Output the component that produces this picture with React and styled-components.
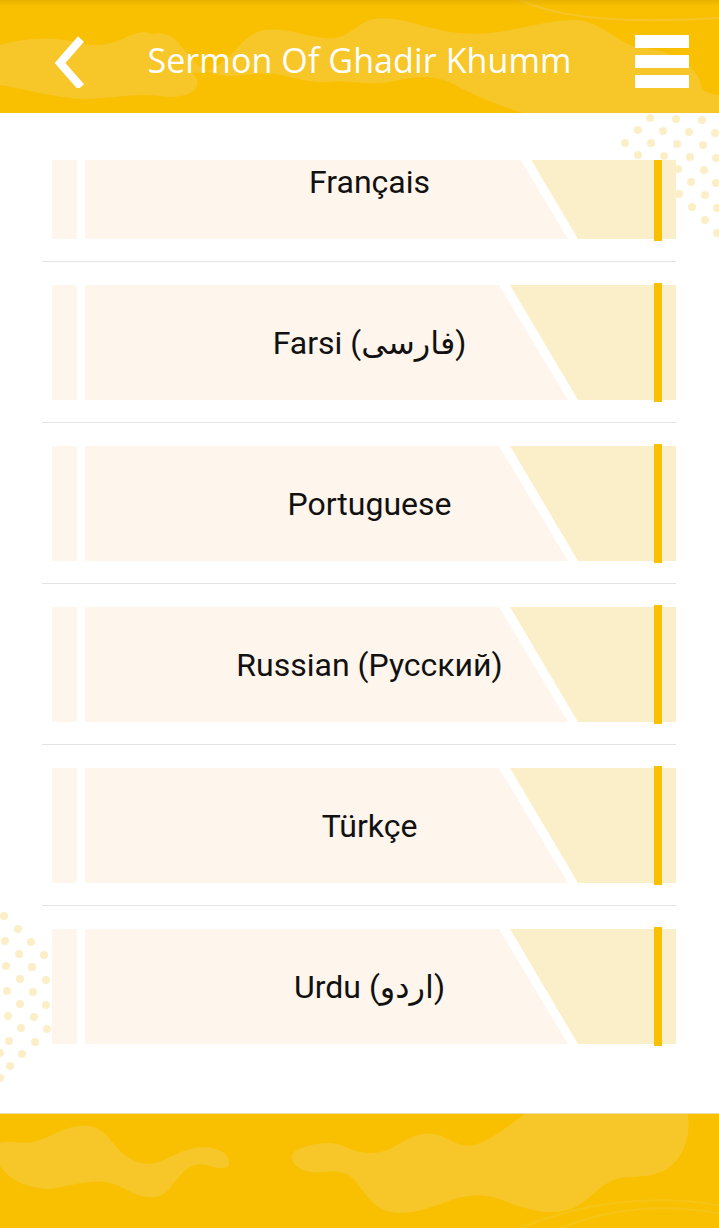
import React from 'react';
import styled, { createGlobalStyle } from 'styled-components';

const GlobalStyle = createGlobalStyle`
  html, body {
    margin: 0;
    padding: 0;
    background: #ffffff;
  }
  body {
    font-family: Roboto, 'DejaVu Sans', sans-serif;
  }
`;

const YELLOW = '#f8c000';
const BLOB = '#f7c628';
const CARD_LIGHT = '#fef5ec';
const CARD_DARK = '#fbefca';
const DOT = '#fcefc8';

const Screen = styled.div`
  width: 719px;
  height: 1228px;
  display: flex;
  flex-direction: column;
  overflow: hidden;
`;

const Header = styled.header`
  position: relative;
  height: 113px;
  flex: none;
  background: ${YELLOW};
  display: grid;
  grid-template-columns: 1fr auto 1fr;
  align-items: center;
  padding-top: 10px;
  box-sizing: border-box;
  overflow: hidden;

  &::before {
    content: '';
    position: absolute;
    left: 0;
    right: 0;
    top: 0;
    height: 6px;
    background: linear-gradient(to bottom, rgba(200, 150, 0, 0.35), rgba(200, 150, 0, 0));
    z-index: 1;
  }
`;

const Waves = styled.svg`
  position: absolute;
  left: 0;
  top: 0;
  width: 100%;
  height: 100%;
  z-index: 0;
`;

const BackButton = styled.button`
  position: relative;
  z-index: 2;
  justify-self: start;
  margin-left: 52px;
  width: 40px;
  height: 52px;
  padding: 0;
  border: 0;
  background: none;
  display: flex;
  align-items: center;
`;

const Title = styled.h1`
  position: relative;
  z-index: 2;
  margin: 0 0 4px;
  font-family: 'Open Sans', sans-serif;
  font-weight: 400;
  font-size: 34px;
  color: #ffffff;
  letter-spacing: 0.1px;
  white-space: nowrap;
`;

const MenuButton = styled.button`
  position: relative;
  z-index: 2;
  justify-self: end;
  margin-right: 30px;
  padding: 0;
  border: 0;
  background: none;
  display: flex;
  flex-direction: column;
  gap: 7px;
`;

const MenuBar = styled.span`
  display: block;
  width: 54px;
  height: 13px;
  background: #ffffff;
`;

const Main = styled.main`
  position: relative;
  flex: 1;
  background: #ffffff;
  overflow: hidden;
`;

const Dots = styled.svg`
  position: absolute;
  left: 0;
  top: 0;
  width: 719px;
  height: 1000px;
  z-index: 0;
`;

const Viewport = styled.div`
  position: relative;
  z-index: 1;
  margin-top: 47px;
  height: 900px;
  overflow: hidden;
`;

const List = styled.ul`
  list-style: none;
  margin: -59px 0 0;
  padding: 0 43px 0 42px;
`;

const Row = styled.li`
  padding: 23px 0 22px 10px;
  border-bottom: 1px solid #e3e3e3;
`;

const Card = styled.div`
  display: flex;
  height: 115px;
  gap: 8px;
  cursor: pointer;
`;

const Stub = styled.span`
  width: 25px;
  flex: none;
  background: ${CARD_LIGHT};
`;

const Plate = styled.div`
  position: relative;
  flex: 1;
  display: flex;
  align-items: center;
  justify-content: center;
  padding-right: 22px;

  &::before {
    content: '';
    position: absolute;
    inset: 0;
    background: ${CARD_LIGHT};
    clip-path: polygon(0 0, calc(100% - 177px) 0, calc(100% - 108px) 100%, 0 100%);
  }

  &::after {
    content: '';
    position: absolute;
    inset: 0;
    background: ${CARD_DARK};
    clip-path: polygon(calc(100% - 166px) 0, 100% 0, 100% 100%, calc(100% - 98px) 100%);
  }
`;

const Marker = styled.span`
  position: absolute;
  right: 14px;
  top: -2px;
  bottom: -2px;
  width: 8px;
  background: ${YELLOW};
  z-index: 1;
`;

const Label = styled.span`
  position: relative;
  z-index: 1;
  font-family: Roboto, 'DejaVu Sans', sans-serif;
  font-size: 32px;
  color: #111111;
`;

const Footer = styled.footer`
  position: relative;
  height: 115px;
  flex: none;
  background: ${YELLOW};
  border-top: 1px solid #eadca8;
  box-sizing: border-box;
  overflow: hidden;
`;

const languages = [
  'Français',
  'Farsi (فارسی)',
  'Portuguese',
  'Russian (Русский)',
  'Türkçe',
  'Urdu (اردو)',
];

const topDots = [
  [650, 118], [676, 119], [702, 120], [638, 130], [663, 131], [689, 132], [715, 133],
  [625, 143], [651, 143], [677, 144], [703, 145], [638, 155], [664, 156], [690, 157],
  [716, 158], [678, 169], [704, 170], [691, 182], [716, 183], [679, 194], [705, 195],
  [692, 207], [717, 208], [705, 220], [717, 233],
];

const bottomDots = [
  [4, 916], [18, 929], [5, 941], [31, 942], [19, 954], [44, 955], [6, 966], [32, 967],
  [20, 979], [46, 980], [7, 991], [33, 992], [20, 1004], [46, 1005], [8, 1016],
  [34, 1017], [21, 1028], [47, 1029], [9, 1041], [35, 1042], [22, 1054], [10, 1066],
  [0, 1053], [0, 1078],
];

const BackIcon = () => (
  <svg width="40" height="52" viewBox="0 0 40 52">
    <polyline points="29,3 8,27 29,51" fill="none" stroke="#ffffff" strokeWidth="8" strokeLinejoin="miter" />
  </svg>
);

const App = () => {
  return (
    <Screen>
      <GlobalStyle />
      <Header>
        <Waves viewBox="0 0 719 113" preserveAspectRatio="none">
          <path
            fill={BLOB}
            d="M0 45 C20 40 40 37 60 40 C90 45 110 50 130 42 C150 33 165 28 178 42 C190 56 200 70 215 74 C235 80 255 70 280 75 C300 79 310 83 330 82 C350 80 370 86 390 82 C410 78 430 72 455 85 C475 96 495 104 523 113 L719 113 L719 95 C705 93 700 90 700 80 C690 58 660 48 640 48 C620 45 600 20 575 20 C545 20 520 30 490 33 C460 36 440 30 420 25 C400 19 380 15 365 22 C350 30 345 40 325 38 C305 36 285 27 265 30 C245 34 240 48 225 60 C215 68 205 75 190 72 C180 70 170 60 155 38 C150 30 140 30 120 40 C100 48 80 50 60 45 Z"
          />
          <path
            fill={BLOB}
            d="M0 45 C25 38 55 36 85 44 C110 50 130 33 155 34 C170 36 180 55 195 76 C205 90 185 100 160 96 C130 92 100 102 70 98 C40 94 20 88 0 85 Z"
          />
          <path fill="none" stroke="#f7c52a" strokeWidth="2" d="M520 0 C560 18 620 24 719 18" />
        </Waves>
        <BackButton aria-label="back">
          <BackIcon />
        </BackButton>
        <Title>Sermon Of Ghadir Khumm</Title>
        <MenuButton aria-label="menu">
          <MenuBar />
          <MenuBar />
          <MenuBar />
        </MenuButton>
      </Header>

      <Main>
        <Dots viewBox="0 113 719 1000">
          {topDots.concat(bottomDots).map(([x, y], i) => (
            <circle key={i} cx={x} cy={y} r="4" fill={DOT} />
          ))}
        </Dots>
        <Viewport>
          <List>
            {languages.map((name) => (
              <Row key={name}>
                <Card>
                  <Stub />
                  <Plate>
                    <Label>{name}</Label>
                    <Marker />
                  </Plate>
                </Card>
              </Row>
            ))}
          </List>
        </Viewport>
      </Main>

      <Footer>
        <Waves viewBox="0 0 719 115" preserveAspectRatio="none">
          <path
            fill={BLOB}
            d="M0 29 C12 26 22 31 34 28 C50 24 65 12 80 12 C95 11 102 15 112 28 C122 40 130 48 145 50 C160 52 175 38 195 34 C212 31 228 38 229 47 C230 56 222 56 212 53 C200 49 190 50 180 62 C170 74 165 85 150 84 C130 83 120 68 100 68 C75 68 55 78 40 75 C20 72 5 62 0 52 Z"
          />
          <path
            fill={BLOB}
            d="M525 0 L688 0 C690 15 688 30 678 45 C665 62 650 63 625 64 C600 66 590 90 570 96 C550 103 525 96 505 88 C490 81 470 79 445 89 C420 99 400 103 385 97 C365 90 360 65 345 60 C330 55 318 62 305 57 C290 52 288 40 297 36 C310 30 330 26 345 33 C360 40 375 42 390 35 C405 28 415 18 432 20 C450 22 458 37 478 30 C495 24 510 10 525 0 Z"
          />
          <path fill="none" stroke="#f6c418" strokeWidth="2" d="M520 115 C580 90 650 80 719 92" />
          <path fill="none" stroke="#f6c418" strokeWidth="2" d="M560 115 C610 95 660 90 719 100" />
        </Waves>
      </Footer>
    </Screen>
  );
};

export default App;
